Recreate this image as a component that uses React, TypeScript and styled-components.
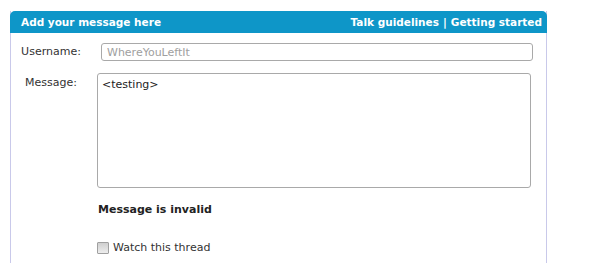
import React from "react";
import styled, { createGlobalStyle } from "styled-components";

const GlobalStyle = createGlobalStyle`
  html, body {
    margin: 0;
    padding: 0;
    background: #ffffff;
  }
  body {
    font-family: 'DejaVu Sans', Verdana, sans-serif;
    font-size: 11px;
    color: #333333;
  }
`;

const Panel = styled.div`
  margin: 11px 0 0 10px;
  width: 537px;
  height: 252px;
  box-sizing: border-box;
  border-left: 1px solid #c9c9ea;
  border-right: 1px solid #c9c9ea;
`;

const Header = styled.div`
  display: flex;
  align-items: center;
  justify-content: space-between;
  height: 22px;
  margin: 0 -1px;
  padding: 0 5px 0 11px;
  background: #0e96c8;
  border-radius: 5px 5px 0 0;
  color: #ffffff;
  font-weight: bold;
  font-size: 10.5px;
`;

const HeaderLinks = styled.div`
  display: flex;
  gap: 4px;
`;

const HeaderLink = styled.a`
  color: #ffffff;
  text-decoration: none;
`;

const Form = styled.div`
  display: grid;
  grid-template-columns: 80px 1fr;
  padding: 10px 13px 0 0;
`;

const Label = styled.label<{ $top: number }>`
  text-align: center;
  color: #333333;
  padding-top: ${(p) => p.$top}px;
`;

const Field = styled.div<{ $indent: number; $gap: number }>`
  padding-left: ${(p) => p.$indent}px;
  margin-bottom: ${(p) => p.$gap}px;
`;

const TextInput = styled.input`
  display: block;
  box-sizing: border-box;
  width: 432px;
  height: 18px;
  padding: 0 5px;
  border: 1px solid #a9a9a9;
  border-radius: 3px;
  font-family: 'DejaVu Sans', Verdana, sans-serif;
  font-size: 11px;
  color: #333333;
  &::placeholder {
    color: #a0a0a0;
  }
`;

const TextArea = styled.textarea`
  display: block;
  box-sizing: border-box;
  width: 434px;
  height: 115px;
  padding: 4px 4px;
  border: 1px solid #a9a9a9;
  border-radius: 3px;
  resize: none;
  font-family: 'DejaVu Sans', Verdana, sans-serif;
  font-size: 11px;
  color: #222222;
`;

const Error = styled.div`
  font-weight: bold;
  color: #222222;
  padding: 15px 0 0 1px;
`;

const WatchRow = styled.label`
  display: flex;
  align-items: center;
  gap: 4px;
  margin-top: 25px;
  color: #333333;
`;

const Box = styled.span`
  width: 10px;
  height: 10px;
  border: 1px solid #a0a0a0;
  border-radius: 1px;
  background: linear-gradient(#cfcfcf, #ededed);
`;

export default function App() {
  return (
    <>
      <GlobalStyle />
      <Panel>
        <Header>
          <span>Add your message here</span>
          <HeaderLinks>
            <HeaderLink href="#">Talk guidelines</HeaderLink>
            <span>|</span>
            <HeaderLink href="#">Getting started</HeaderLink>
          </HeaderLinks>
        </Header>
        <Form>
          <Label $top={2}>Username:</Label>
          <Field $indent={10} $gap={12}>
            <TextInput placeholder="WhereYouLeftIt" />
          </Field>
          <Label $top={3}>Message:</Label>
          <Field $indent={6} $gap={0}>
            <TextArea defaultValue="<testing>" />
            <Error>Message is invalid</Error>
            <WatchRow>
              <Box />
              Watch this thread
            </WatchRow>
          </Field>
        </Form>
      </Panel>
    </>
  );
}
